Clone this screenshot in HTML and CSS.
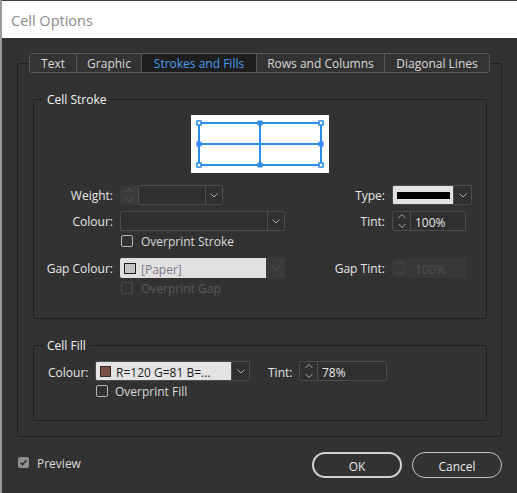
FILE: index.html
```html
<!DOCTYPE html>
<html lang="en">
<head>
<meta charset="utf-8">
<title>Cell Options</title>
<link rel="stylesheet" href="styles.css">
</head>
<body>
<div class="window">
  <header class="titlebar">Cell Options</header>
  <main class="dialog">
    <section class="panel">
      <nav class="tabs">
        <span class="tab tab-text">Text</span>
        <span class="tab tab-graphic">Graphic</span>
        <span class="tab tab-strokes active">Strokes and Fills</span>
        <span class="tab tab-rows">Rows and Columns</span>
        <span class="tab tab-diag">Diagonal Lines</span>
      </nav>

      <div class="group stroke-group">
        <div class="group-title">Cell Stroke</div>
        <div class="stroke-preview">
          <svg width="138" height="58" viewBox="0 0 138 58">
            <g fill="none" stroke="#2d8cea" stroke-width="2">
              <rect x="8" y="8" width="122" height="42"/>
              <line x1="69" y1="8" x2="69" y2="50"/>
              <line x1="8" y1="29" x2="130" y2="29"/>
            </g>
            <g fill="#2d8cea">
              <rect x="66.5" y="5.5" width="5" height="5"/>
              <rect x="66.5" y="47.5" width="5" height="5"/>
              <rect x="5.5" y="26.5" width="5" height="5"/>
              <rect x="127.5" y="26.5" width="5" height="5"/>
            </g>
            <g fill="#fff" stroke="#2d8cea" stroke-width="1.5">
              <rect x="6" y="6" width="4" height="4"/>
              <rect x="128" y="6" width="4" height="4"/>
              <rect x="6" y="48" width="4" height="4"/>
              <rect x="128" y="48" width="4" height="4"/>
            </g>
          </svg>
        </div>

        <div class="frow row-first">
          <span class="lbl">Weight:</span>
          <div class="weight">
            <span class="spin-btn disabled">
              <svg width="8" height="16" viewBox="0 0 8 16"><polyline points="0.5,5 4,1.5 7.5,5" fill="none" stroke="currentColor"/><polyline points="0.5,11 4,14.5 7.5,11" fill="none" stroke="currentColor"/></svg>
            </span>
            <div class="field weight-field">
              <span class="val"></span>
              <span class="dd-btn"><svg width="8" height="5" viewBox="0 0 8 5"><polyline points="0.5,0.5 4,4 7.5,0.5" fill="none" stroke="currentColor"/></svg></span>
            </div>
          </div>
          <span class="lbl">Type:</span>
          <div class="field type-field">
            <span class="val light"><span class="line-sample"></span></span>
            <span class="dd-btn btn-18"><svg width="8" height="5" viewBox="0 0 8 5"><polyline points="0.5,0.5 4,4 7.5,0.5" fill="none" stroke="currentColor"/></svg></span>
          </div>
        </div>

        <div class="frow row-next">
          <span class="lbl">Colour:</span>
          <div class="field colour-field">
            <span class="val"></span>
            <span class="dd-btn"><svg width="8" height="5" viewBox="0 0 8 5"><polyline points="0.5,0.5 4,4 7.5,0.5" fill="none" stroke="currentColor"/></svg></span>
          </div>
          <span class="lbl">Tint:</span>
          <div class="field spin-field tint-field">
            <span class="spin-btn">
              <svg width="8" height="16" viewBox="0 0 8 16"><polyline points="0.5,5 4,1.5 7.5,5" fill="none" stroke="currentColor"/><polyline points="0.5,11 4,14.5 7.5,11" fill="none" stroke="currentColor"/></svg>
            </span>
            <span class="val text-val">100%</span>
          </div>
        </div>

        <div class="check-row stroke-check row-check">
          <span class="checkbox"></span>
          <span class="check-label">Overprint Stroke</span>
        </div>

        <div class="frow row-gap">
          <span class="lbl">Gap Colour:</span>
          <div class="field gapc-field">
            <span class="val light text-val"><span class="swatch paper"></span><span class="paper-text">[Paper]</span></span>
            <span class="dd-btn dis-btn"><svg width="8" height="5" viewBox="0 0 8 5"><polyline points="0.5,0.5 4,4 7.5,0.5" fill="none" stroke="currentColor"/></svg></span>
          </div>
          <span class="lbl">Gap Tint:</span>
          <div class="field spin-field tint-field disabled-field">
            <span class="spin-btn disabled">
              <svg width="8" height="16" viewBox="0 0 8 16"><polyline points="0.5,5 4,1.5 7.5,5" fill="none" stroke="currentColor"/><polyline points="0.5,11 4,14.5 7.5,11" fill="none" stroke="currentColor"/></svg>
            </span>
            <span class="val text-val">100%</span>
          </div>
        </div>

        <div class="check-row stroke-check row-check disabled-check">
          <span class="checkbox"></span>
          <span class="check-label">Overprint Gap</span>
        </div>
      </div>

      <div class="group fill-group">
        <div class="group-title">Cell Fill</div>
        <div class="fill-row">
          <span class="fill-lbl">Colour:</span>
          <div class="field fillc-field">
            <span class="val light text-val"><span class="swatch brown"></span><span class="fill-text">R=120 G=81 B=...</span></span>
            <span class="dd-btn btn-18"><svg width="8" height="5" viewBox="0 0 8 5"><polyline points="0.5,0.5 4,4 7.5,0.5" fill="none" stroke="currentColor"/></svg></span>
          </div>
          <span class="fill-tint-lbl">Tint:</span>
          <div class="field spin-field fill-tint-field">
            <span class="spin-btn">
              <svg width="8" height="16" viewBox="0 0 8 16"><polyline points="0.5,5 4,1.5 7.5,5" fill="none" stroke="currentColor"/><polyline points="0.5,11 4,14.5 7.5,11" fill="none" stroke="currentColor"/></svg>
            </span>
            <span class="val text-val">78%</span>
          </div>
        </div>
        <div class="check-row fill-check">
          <span class="checkbox"></span>
          <span class="check-label">Overprint Fill</span>
        </div>
      </div>
    </section>

    <footer class="footer">
      <div class="preview-check">
        <span class="checkbox checked"><svg width="11" height="11" viewBox="0 0 11 11"><polyline points="2.5,5.5 4.6,7.6 8.5,3.3" fill="none" stroke="#2e2e2e" stroke-width="1.6"/></svg></span>
        <span class="check-label">Preview</span>
      </div>
      <div class="buttons">
        <button class="btn btn-default">OK</button>
        <button class="btn">Cancel</button>
      </div>
    </footer>
  </main>
</div>
</body>
</html>
```

FILE: styles.css
```css
* { box-sizing: border-box; }
html, body { margin: 0; padding: 0; }
body {
  width: 517px;
  height: 493px;
  overflow: hidden;
  background: #323232;
  font-family: "Open Sans", "Noto Sans", sans-serif;
  font-size: 12px;
  color: #e3e3e3;
}
.window {
  height: 493px;
  border-left: 2px solid #9a9a9a;
  display: flex;
  flex-direction: column;
}
.titlebar {
  flex: none;
  height: 38px;
  background: #fff;
  border-top: 1px solid #3c3c3c;
  display: flex;
  align-items: center;
  padding: 1px 0 0 9px;
  font-size: 14.5px;
  color: #8a8a8a;
}
.dialog { flex: 1; display: flex; flex-direction: column; }

.panel {
  margin: 25px 0 0 15px;
  width: 485px;
  height: 374px;
  border: 1px solid #1f1f1f;
  border-radius: 2px;
}
.tabs {
  display: flex;
  margin: -11px 0 0 11px;
  width: 461px;
  height: 20px;
  border: 1px solid #595959;
  border-radius: 3px;
  background: #333;
  overflow: hidden;
}
.tab {
  flex: none;
  display: flex;
  align-items: center;
  justify-content: center;
  padding-top: 2px;
  color: #d9d9d9;
  border-left: 1px solid #595959;
  line-height: 16px;
}
.tab-text { width: 46px; border-left: 0; }
.tab-graphic { width: 65px; }
.tab-strokes { width: 115px; }
.tab-rows { width: 128px; }
.tab-diag { width: 105px; }
.tab.active { background: #1e1e1e; color: #4a9cef; }

.group {
  margin: 26px 14px 0 15px;
  border: 1px solid #1f1f1f;
  border-radius: 2px;
}
.group-title {
  width: max-content;
  margin: -9px 0 0 10px;
  padding: 1px 3px 0;
  line-height: 16px;
  background: #323232;
  color: #f4f4f4;
}
.stroke-group { padding-bottom: 24px; }
.fill-group { padding-bottom: 23px; }

.stroke-preview {
  width: 138px;
  height: 58px;
  margin: 7px auto 0;
  background: #fff;
}
.stroke-preview svg { display: block; }

.frow {
  display: grid;
  grid-template-columns: 79px 165px 93px 80px;
  column-gap: 7px;
  align-items: center;
  height: 20px;
}
.row-first { margin-top: 11px; }
.row-next { margin-top: 6px; }
.row-gap { margin-top: 10px; }
.row-check { margin-top: 5px; }
.lbl {
  text-align: right;
  color: #e6e6e6;
  line-height: 20px;
  padding-top: 2px;
  white-space: nowrap;
}

.field {
  display: flex;
  height: 20px;
  border: 1px solid #4d4d4d;
  border-radius: 2px;
  background: #2f2f2f;
  overflow: hidden;
}
.field .val {
  flex: 1;
  min-width: 0;
  display: flex;
  align-items: center;
  padding-left: 4px;
  white-space: nowrap;
  color: #e6e6e6;
}
.field .val.text-val { padding-top: 2px; }
.field .val.light { background: #e3e3e3; color: #1e1e1e; }
.dd-btn {
  flex: none;
  width: 17px;
  display: flex;
  align-items: center;
  justify-content: center;
  border-left: 1px solid #4d4d4d;
  color: #b0b0b0;
}
.dd-btn svg, .spin-btn svg { display: block; }
.btn-18 { width: 18px; }
.spin-btn {
  flex: none;
  width: 18px;
  display: flex;
  align-items: center;
  justify-content: center;
  border-right: 1px solid #4d4d4d;
  color: #a8a8a8;
}

.weight { display: flex; width: 103px; height: 20px; }
.weight .spin-btn.disabled {
  background: #3a3a3a;
  border-right: 0;
  border-radius: 2px 0 0 2px;
  color: #555;
}
.weight-field { width: 85px; }
.colour-field { width: 165px; }
.type-field { width: 80px; }
.type-field .val.light { padding-left: 4px; }
.line-sample { display: block; width: 53px; height: 7px; background: #000; }
.tint-field { width: 74px; }

.gapc-field { width: 165px; border: 0; background: #3a3a3a; }
.gapc-field .val.light { padding-left: 4px; background: #e0e0e0; }
.dis-btn { width: 19px; border-left: 0; background: #3a3a3a; color: #555; }
.swatch { flex: none; display: block; width: 12px; height: 11px; border: 1px solid #1c1c1c; }
.text-val .swatch { margin-top: -2px; }
.swatch.paper { background: #c5c5c5; }
.paper-text { margin-left: 5px; color: #84788a; }

.disabled-field { border: 0; background: #383838; }
.disabled-field .spin-btn { border-right: 1px solid #363636; color: #4f4f4f; }
.disabled-field .val { color: #4f4f4f; padding-left: 5px; }

.check-row {
  display: flex;
  align-items: center;
  gap: 8px;
  height: 12px;
}
.stroke-check { margin-left: 87px; }
.checkbox {
  flex: none;
  width: 12px;
  height: 12px;
  border: 1px solid #b5b5b5;
  border-radius: 2px;
}
.check-label {
  color: #d9d9d9;
  line-height: 16px;
  padding-top: 2px;
  white-space: nowrap;
}
.disabled-check .checkbox { border-color: #4a4a4a; }
.disabled-check .check-label { color: #595959; }

.fill-row {
  display: flex;
  align-items: center;
  height: 20px;
  margin-top: 7px;
  padding-left: 14px;
}
.fill-lbl { width: 47px; color: #e6e6e6; padding-top: 2px; }
.fillc-field { width: 155px; }
.fillc-field .val.light { padding-left: 4px; }
.swatch.brown { width: 11px; background: #785144; border-color: #3a2a24; }
.fill-text { margin-left: 5px; color: #1e1e1e; }
.fill-tint-lbl { width: 31px; margin-left: 18px; color: #e6e6e6; padding-top: 2px; }
.fill-tint-field { width: 88px; }
.fill-check { margin-top: 4px; margin-left: 62px; gap: 7px; }

.footer {
  display: flex;
  align-items: flex-start;
  margin-top: 15px;
  padding: 0 15px 0 16px;
}
.preview-check {
  display: flex;
  align-items: center;
  gap: 8px;
  margin-top: 5px;
  height: 11px;
}
.checkbox.checked {
  width: 11px;
  height: 11px;
  border: 0;
  background: #8f8f8f;
}
.checkbox.checked svg { display: block; }
.buttons { margin-left: auto; display: flex; gap: 10px; }
.btn {
  width: 90px;
  height: 26px;
  border: 1px solid #c2c2c2;
  border-radius: 13px;
  background: transparent;
  color: #e8e8e8;
  font-family: "Open Sans", "Noto Sans", sans-serif;
  font-size: 12px;
  padding: 2px 0 0;
}
.btn-default { border: 2px solid #d2d2d2; }
```
